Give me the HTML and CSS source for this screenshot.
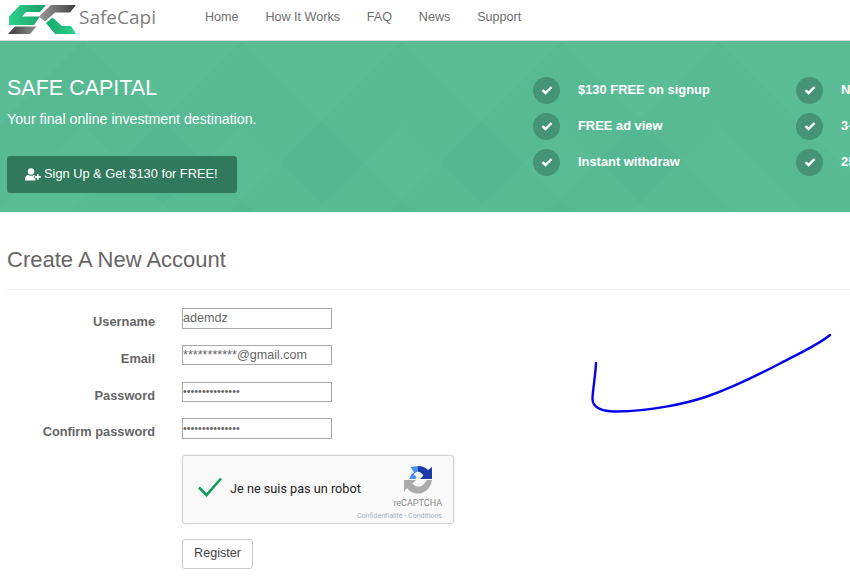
FILE: index.html
```html
<!DOCTYPE html>
<html lang="en">
<head>
<meta charset="utf-8">
<title>SafeCapi - Create A New Account</title>
<link rel="stylesheet" href="styles.css">
</head>
<body>
<header class="topbar">
  <a class="brand" href="#">
    <svg class="brand-mark" viewBox="0 0 78 34" aria-hidden="true">
      <defs>
        <linearGradient id="g1" x1="0" x2="1"><stop offset="0" stop-color="#2fd08c"/><stop offset="1" stop-color="#169f68"/></linearGradient>
        <linearGradient id="g2" x1="0" x2="1"><stop offset="0" stop-color="#3c3c3c"/><stop offset="1" stop-color="#8f8f8f"/></linearGradient>
        <linearGradient id="g3" x1="0" x2="1"><stop offset="0" stop-color="#9a9a9a"/><stop offset="1" stop-color="#3f3f3f"/></linearGradient>
        <linearGradient id="g4" x1="0" x2="1"><stop offset="0" stop-color="#14a86c"/><stop offset="1" stop-color="#2fd08c"/></linearGradient>
      </defs>
      <path fill="url(#g1)" d="M20 3H46L40 10H26L22 14.500H40L34 23H9V14.500Z"/>
      <path fill="url(#g2)" d="M15 24.500H36.500L30 32H8Z"/>
      <path fill="url(#g3)" d="M51 3H76L70 10.500H55L45 19.500L39 14.500Z"/>
      <path fill="url(#g4)" d="M46 21L52.500 15.500L62 24H71L76 32H55Z"/>
    </svg>
    <span class="brand-name">SafeCapi</span>
  </a>
  <nav class="menu">
    <a href="#">Home</a>
    <a href="#">How It Works</a>
    <a href="#">FAQ</a>
    <a href="#">News</a>
    <a href="#">Support</a>
  </nav>
</header>

<section class="hero">
  <svg class="hero-bg" viewBox="0 0 850 171" preserveAspectRatio="none" aria-hidden="true">
    <g fill="#3f9f79" fill-opacity=".07">
      <path d="M83 0L254 171H-88Z"/>
      <path d="M242 0L413 171H71Z"/>
      <path d="M402 0L573 171H231Z"/>
      <path d="M562 0L733 171H391Z"/>
      <path d="M718 0L889 171H547Z"/>
    </g>
    <g fill="#6bcaa4" fill-opacity=".14">
      <path d="M83 84L170 171H-4Z"/>
      <path d="M242 84L329 171H155Z"/>
      <path d="M402 84L489 171H315Z"/>
      <path d="M562 84L649 171H475Z"/>
      <path d="M718 84L805 171H631Z"/>
    </g>
  </svg>
  <div class="hero-intro">
    <h1>SAFE CAPITAL</h1>
    <p>Your final online investment destination.</p>
    <a class="cta" href="#">
      <svg class="cta-icon" viewBox="0 0 20 16" aria-hidden="true"><circle cx="7.500" cy="4.200" r="4"/><path d="M0 15.500C0 10.500 2 8.500 4 8.500C6 10 9 10 11 8.500C12 8.800 12.700 9.300 13 10H11.500V12.500H13V15.500Z"/><path d="M15 7.500H17V10H19.800V12H17V14.500H15V12H12.500V10H15Z"/></svg>
      <span>Sign Up &amp; Get $130 for FREE!</span>
    </a>
  </div>
  <ul class="perks">
    <li><span class="tick"><svg viewBox="0 0 12 10"><path d="M1.500 5.200L4.500 8L10.500 2"/></svg></span><span class="perk-text">$130 FREE on signup</span></li>
    <li><span class="tick"><svg viewBox="0 0 12 10"><path d="M1.500 5.200L4.500 8L10.500 2"/></svg></span><span class="perk-text">FREE ad view</span></li>
    <li><span class="tick"><svg viewBox="0 0 12 10"><path d="M1.500 5.200L4.500 8L10.500 2"/></svg></span><span class="perk-text">Instant withdraw</span></li>
  </ul>
  <ul class="perks">
    <li><span class="tick"><svg viewBox="0 0 12 10"><path d="M1.500 5.200L4.500 8L10.500 2"/></svg></span><span class="perk-text">No fees</span></li>
    <li><span class="tick"><svg viewBox="0 0 12 10"><path d="M1.500 5.200L4.500 8L10.500 2"/></svg></span><span class="perk-text">3-level referral</span></li>
    <li><span class="tick"><svg viewBox="0 0 12 10"><path d="M1.500 5.200L4.500 8L10.500 2"/></svg></span><span class="perk-text">25% bonus</span></li>
  </ul>
</section>

<main class="content">
  <h2>Create A New Account</h2>
  <form class="signup">
    <label for="u">Username</label><input id="u" type="text" value="ademdz">
    <label for="e">Email</label><input id="e" type="text" value="***********@gmail.com">
    <label for="p">Password</label><input id="p" type="password" value="aaaaaaaaaaaaaaa">
    <label for="c">Confirm password</label><input id="c" type="password" value="aaaaaaaaaaaaaaa">
    <div class="captcha">
      <svg class="captcha-check" viewBox="0 0 26 22" aria-hidden="true"><path d="M2 11.500L9.500 19L24 2.500"/></svg>
      <span class="captcha-text">Je ne suis pas un robot</span>
      <div class="captcha-brand">
        <svg class="captcha-logo" viewBox="0 0 28 28" aria-hidden="true">
          <path fill="#4a90f2" d="M0 13H5.500C6 9.500 8 7.500 10 6.500L6.500 1L14 0V5.500C12 6 10.500 7 10 8.500L12.500 11L11.500 13H0Z"/>
          <path fill="#1c3aa9" d="M14 0C18 0 21.500 1.500 24 4L28 1V13H16L19.500 9.500C18 7 16 6 14 5.700Z"/>
          <path fill="#ababab" d="M0 14H12L8.500 17.500C11 21.500 17 21.500 20 18L23 14H28C27 22 21 27.500 14 27.500C9 27.500 5 25 3 22L0 26Z"/>
        </svg>
        <span class="captcha-name">reCAPTCHA</span>
        <span class="captcha-links">Confidentialité - Conditions</span>
      </div>
    </div>
    <button class="submit" type="button">Register</button>
  </form>
</main>

<svg class="scribble" viewBox="0 0 850 582" aria-hidden="true">
  <path d="M596 363C595.500 375 593 388 592.500 398C592 408 603 412 617 411.500C650 411 685 404 707 396.500C735 387 760 374 780 363.500C800 353 818 345 830 335"/>
</svg>
</body>
</html>
```
FILE: styles.css
```css
* { box-sizing: border-box; }
html, body { margin: 0; height: 582px; overflow: hidden; background: #fff; }
body { position: relative; font-family: "Liberation Sans", Arial, sans-serif; font-size: 13px; color: #666; }
a { text-decoration: none; color: inherit; }

.topbar { height: 41px; display: flex; align-items: center; border-bottom: 1px solid #ddd; background: #fff; }
.brand { display: flex; align-items: center; width: 192px; height: 40px; }
.brand-mark { width: 78px; height: 34px; flex: none; margin-bottom: 2px; }
.brand-name { font-family: "Open Sans", sans-serif; font-size: 19px; color: #808080; margin-left: 1px; margin-bottom: 6px; }
.menu { display: flex; gap: 26.800px; margin-left: 13px; margin-bottom: 6px; font-size: 12.600px; color: #6e6e6e; }

.hero { position: relative; height: 171px; display: flex; background: #5bbd95; color: #fff; overflow: hidden; }
.hero-bg { position: absolute; inset: 0; width: 850px; height: 171px; }
.hero-intro { position: relative; width: 533px; flex: none; padding: 33px 0 0 7px; }
.hero h1 { margin: 0; font-size: 21.500px; font-weight: 400; line-height: 28px; }
.hero p { margin: 8px 0 0; font-size: 14.200px; line-height: 18px; }
.cta { display: inline-flex; align-items: center; gap: 3px; width: 230px; height: 37px; margin-top: 28px; padding-left: 18px; border-radius: 3px; background: #31795c; font-size: 12.800px; }
.cta span { margin-bottom: 2px; font-size: 12.800px; }
.cta-icon { width: 16px; height: 13px; fill: #fff; flex: none; }
.perks { position: relative; width: 263px; flex: none; margin: 0; padding: 31px 0 0; list-style: none; font-size: 12.900px; font-weight: 700; }
.perks li { display: flex; align-items: center; gap: 18px; height: 36px; white-space: nowrap; }
.perk-text { margin-bottom: 2px; }
.tick { width: 27px; height: 27px; flex: none; display: flex; align-items: center; justify-content: center; border-radius: 50%; background: #459475; }
.tick svg { width: 12px; height: 10px; fill: none; stroke: #fff; stroke-width: 2.400; }

.content { padding: 0 0 0 7px; }
.content h2 { margin: 0; padding: 34px 0 16px; height: 78px; border-bottom: 1px solid #eee; font-size: 22px; font-weight: 400; line-height: 27px; color: #666; }
.signup { display: grid; grid-template-columns: 148px 272px; grid-template-rows: repeat(4, 36.800px) 84px 30px; column-gap: 27px; margin-top: 18px; align-items: start; }
.signup label { text-align: right; font-size: 12.800px; font-weight: 700; padding-top: 6px; line-height: 15px; color: #666; }
.signup input { width: 150px; height: 20.500px; margin: 0; padding: 0 0 1px; border: 1px solid #a9a9a9; font: 12.600px "Liberation Sans", Arial, sans-serif; color: #666; outline: none; border-radius: 0; background: #fff; }
.signup input[type="password"] { font-size: 10.800px; }

.captcha { grid-column: 2; display: flex; align-items: flex-start; width: 272px; height: 69px; background: #f9f9f9; border: 1px solid #d3d3d3; border-radius: 3px; box-shadow: 0 0 3px rgba(0,0,0,.08); font-family: Roboto, sans-serif; }
.captcha-check { width: 26px; height: 22px; margin: 20px 0 0 14px; fill: none; stroke: #109d58; stroke-width: 2.600; flex: none; }
.captcha-text { margin: 25px -20px 0 7px; font-size: 12.700px; line-height: 15px; color: #222; white-space: nowrap; flex: none; }
.captcha-brand { display: flex; flex-direction: column; align-items: flex-end; flex: none; margin: 10px 11px 0 auto; }
.captcha-logo { width: 28px; height: 28px; margin-right: 10px; }
.captcha-name { margin-top: 4px; font-size: 9px; line-height: 11px; color: #8a8a8a; }
.captcha-links { margin-top: 3px; font-size: 7.100px; line-height: 8px; color: #a4b4c4; white-space: nowrap; }

.submit { grid-column: 2; width: 71px; height: 30px; margin: 0; padding: 0 0 2px; border: 1px solid #ccc; border-radius: 3px; background: #fff; font: 12.600px "Liberation Sans", Arial, sans-serif; color: #444; }

.scribble { position: absolute; left: 0; top: 0; width: 850px; height: 582px; pointer-events: none; }
.scribble path { fill: none; stroke: #0404e8; stroke-width: 2.400; stroke-linecap: round; }
```
